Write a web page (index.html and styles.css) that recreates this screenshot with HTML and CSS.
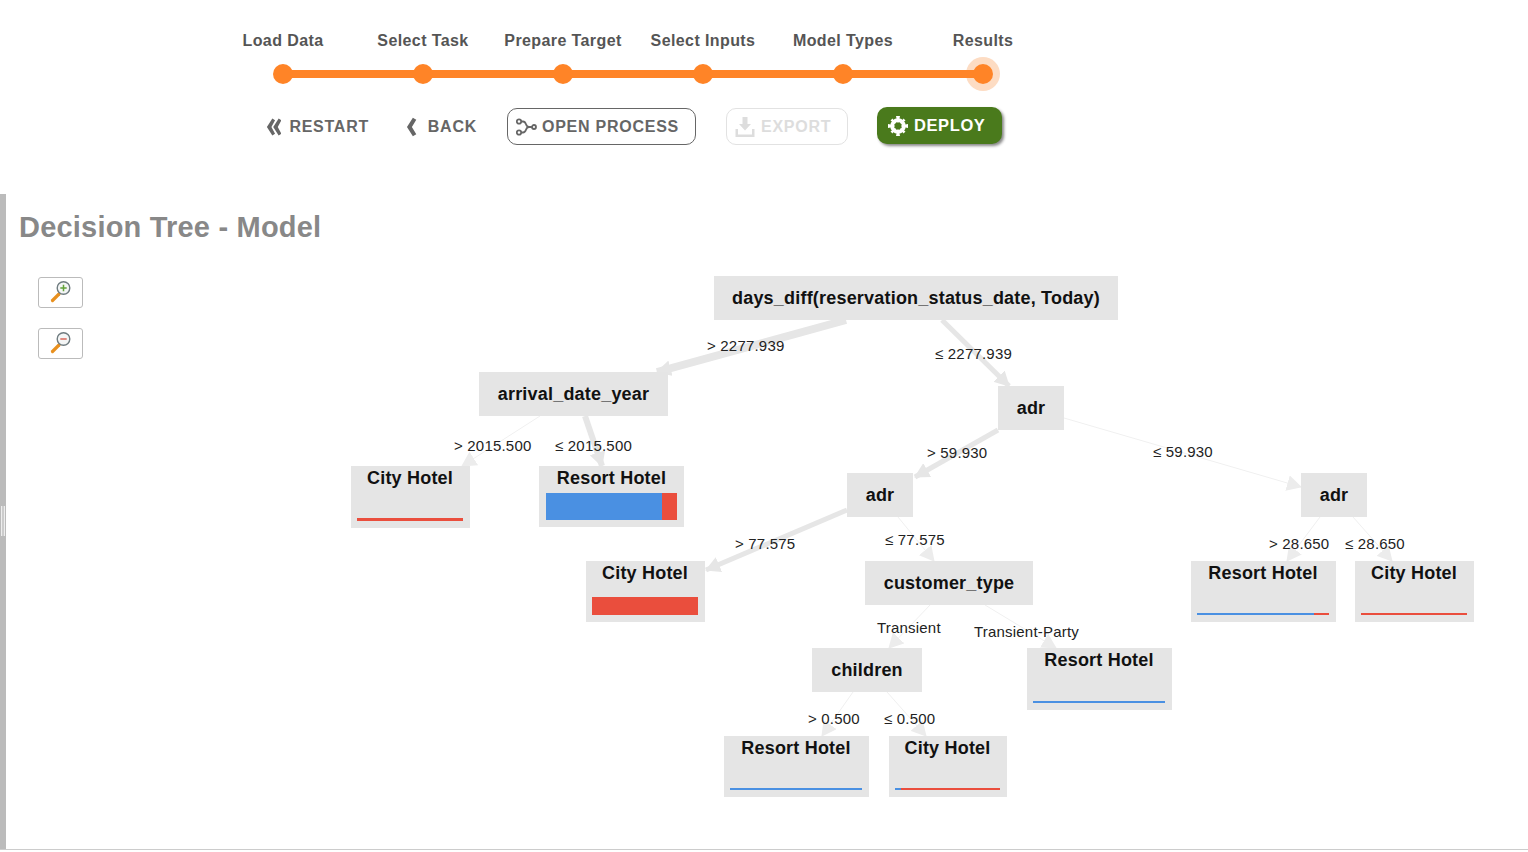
FILE: index.html
```html
<!DOCTYPE html>
<html lang="en">
<head>
    <meta charset="UTF-8">
    <title>Decision Tree - Model</title>
    <link rel="stylesheet" href="styles.css">
</head>
<body>

    <header class="top">
        <ol class="steps">
            <li class="step">Load Data</li>
            <li class="step">Select Task</li>
            <li class="step">Prepare Target</li>
            <li class="step">Select Inputs</li>
            <li class="step">Model Types</li>
            <li class="step step-current">Results</li>
        </ol>

        <div class="actions">
            <button class="btn btn-plain btn-restart">
                <svg width="17" height="20" viewBox="0 0 17 20"><path d="M7 0.500 L1 10 L7 19.500 L10 17.500 L6 10 L10 2.500 Z M14 0.500 L8 10 L14 19.500 L17 17.500 L13 10 L17 2.500 Z" fill="#666"/></svg>
                RESTART
            </button>
            <button class="btn btn-plain btn-back">
                <svg width="11" height="20" viewBox="0 0 11 20"><path d="M7 0.500 L1 10 L7 19.500 L10.500 17.500 L6 10 L10.500 2.500 Z" fill="#666"/></svg>
                BACK
            </button>
            <button class="btn btn-box btn-open">
                <svg width="21" height="18" viewBox="0 0 21 18" fill="none" stroke="#666" stroke-width="1.800"><circle cx="3" cy="3.500" r="2.200"/><circle cx="3" cy="14.500" r="2.200"/><circle cx="18" cy="9" r="2"/><path d="M5.500 3.500 H7 C11 3.500 9 9 13 9 H16 M5.500 14.500 H7 C11 14.500 9 9 13 9"/></svg>
                OPEN PROCESS
            </button>
            <button class="btn btn-box btn-export">
                <svg width="20" height="22" viewBox="0 0 20 22"><path d="M7.500 1 H12.500 V8 H16 L10 14.500 L4 8 H7.500 Z M0.500 13 H3 V18.500 H17 V13 H19.500 V21 H0.500 Z" fill="#ddd"/></svg>
                EXPORT
            </button>
            <button class="btn btn-deploy">
                <svg width="20" height="20" viewBox="0 0 20 20"><circle cx="10" cy="10" r="5.800" fill="none" stroke="#fff" stroke-width="4"/><path d="M10 10 L8 0 H12 Z M10 10 L8 20 H12 Z M10 10 L0 8 V12 Z M10 10 L20 8 V12 Z M10 10 L2.500 4.500 L4.500 2.500 Z M10 10 L15.500 2.500 L17.500 4.500 Z M10 10 L2.500 15.500 L4.500 17.500 Z M10 10 L15.500 17.500 L17.500 15.500 Z" fill="#fff"/><circle cx="10" cy="10" r="3.400" fill="#4a7a1c"/></svg>
                DEPLOY
            </button>
        </div>
    </header>

    <main class="panel">
        <div class="splitter"><span class="grip"></span></div>
        <section class="content">
            <h1 class="title">Decision Tree - Model</h1>

            <div class="tree">
                <svg class="edges" width="1522" height="586" viewBox="0 0 1522 586">
                    <defs>
                        <marker id="head" markerUnits="userSpaceOnUse" markerWidth="15" markerHeight="16" refX="14" refY="8" orient="auto">
                            <path d="M0 0 L15 8 L0 16 Z" fill="#e6e6e6"/>
                        </marker>
                        <marker id="head-thin" markerUnits="userSpaceOnUse" markerWidth="15" markerHeight="16" refX="14" refY="8" orient="auto">
                            <path d="M0 0 L15 8 L0 16 Z" fill="#ececec"/>
                        </marker>
                    </defs>
                    <g fill="none" stroke="#e6e6e6" marker-end="url(#head)">
                        <path stroke-width="8" d="M840 58 L651 110"/>
                        <path stroke-width="5" d="M936 58 L1003 124"/>
                        <path stroke-width="5" d="M992 168 L909 215"/>
                        <path stroke-width="6" d="M579 154 L596 204"/>
                        <path stroke-width="5" d="M841 248 L700 308"/>
                    </g>
                    <g fill="none" stroke="#f0f0f0" stroke-width="1" marker-end="url(#head-thin)">
                        <path d="M1058 156 L1295 225"/>
                        <path d="M534 154 L456 204"/>
                        <path d="M892 255 L928 299"/>
                        <path d="M924 343 L883 386"/>
                        <path d="M979 343 L1050 386"/>
                        <path d="M847 430 L816 474"/>
                        <path d="M881 430 L920 474"/>
                        <path d="M1314 255 L1281 299"/>
                        <path d="M1347 255 L1386 299"/>
                    </g>
                </svg>

                <div class="zoom">
                    <button class="zoom-btn">
                        <svg width="22" height="24" viewBox="0 0 22 24"><path d="M9 15 L2.500 21.500" stroke="#e8901f" stroke-width="3.200" stroke-linecap="round"/><circle cx="13.500" cy="9" r="6.300" fill="#f4f6f6" stroke="#6f7c80" stroke-width="1.400"/><path d="M13.500 5.800 V12.200 M10.300 9 H16.700" stroke="#62a23a" stroke-width="1.500"/></svg>
                    </button>
                    <button class="zoom-btn">
                        <svg width="22" height="24" viewBox="0 0 22 24"><path d="M9 15 L2.500 21.500" stroke="#e8901f" stroke-width="3.200" stroke-linecap="round"/><circle cx="13.500" cy="9" r="6.300" fill="#f4f6f6" stroke="#6f7c80" stroke-width="1.400"/><path d="M10.300 9 H16.700" stroke="#d9675a" stroke-width="1.500"/></svg>
                    </button>
                </div>

                <div class="node n-root">days_diff(reservation_status_date, Today)</div>
                <div class="node n-year">arrival_date_year</div>
                <div class="node n-adr1">adr</div>
                <div class="node n-adr2">adr</div>
                <div class="node n-adr3">adr</div>
                <div class="node n-cust">customer_type</div>
                <div class="node n-child">children</div>

                <div class="leaf l-city1">City Hotel
                    <div class="bar" style="height:3px"><i class="red" style="width:100%"></i></div>
                </div>
                <div class="leaf l-resort1">Resort Hotel
                    <div class="bar" style="height:27px"><i class="blue" style="width:88.500%"></i><i class="red" style="width:11.500%"></i></div>
                </div>
                <div class="leaf l-city2">City Hotel
                    <div class="bar" style="height:18px"><i class="red" style="width:100%"></i></div>
                </div>
                <div class="leaf l-resort2">Resort Hotel
                    <div class="bar" style="height:2px"><i class="blue" style="width:100%"></i></div>
                </div>
                <div class="leaf l-resort3">Resort Hotel
                    <div class="bar" style="height:2px"><i class="blue" style="width:100%"></i></div>
                </div>
                <div class="leaf l-city3">City Hotel
                    <div class="bar" style="height:2px"><i class="blue" style="width:6%"></i><i class="red" style="width:94%"></i></div>
                </div>
                <div class="leaf l-resort4">Resort Hotel
                    <div class="bar" style="height:2px"><i class="blue" style="width:89%"></i><i class="red" style="width:11%"></i></div>
                </div>
                <div class="leaf l-city4">City Hotel
                    <div class="bar" style="height:2px"><i class="red" style="width:100%"></i></div>
                </div>

                <span class="edge-label e1">&gt; 2277.939</span>
                <span class="edge-label e2">≤ 2277.939</span>
                <span class="edge-label e3">&gt; 2015.500</span>
                <span class="edge-label e4">≤ 2015.500</span>
                <span class="edge-label e5">&gt; 59.930</span>
                <span class="edge-label e6">≤ 59.930</span>
                <span class="edge-label e7">&gt; 77.575</span>
                <span class="edge-label e8">≤ 77.575</span>
                <span class="edge-label e9">&gt; 28.650</span>
                <span class="edge-label e10">≤ 28.650</span>
                <span class="edge-label e11">Transient</span>
                <span class="edge-label e12">Transient-Party</span>
                <span class="edge-label e13">&gt; 0.500</span>
                <span class="edge-label e14">≤ 0.500</span>
            </div>
        </section>
    </main>

</body>
</html>
```

FILE: styles.css
```css
html, body {
    margin: 0;
    height: 100%;
    background-color: #fff;
    overflow: hidden;
}
body {
    font-family: "Liberation Sans", Arial, sans-serif;
}

/* stepper and buttons */
.top {
    height: 194px;
    padding-left: 213px;
    box-sizing: border-box;
}
.steps {
    display: flex;
    list-style: none;
    margin: 0;
    padding: 32px 0 0;
}
.step {
    position: relative;
    width: 140px;
    height: 55px;
    text-align: center;
    font-size: 16px;
    font-weight: bold;
    line-height: 18px;
    letter-spacing: 0.4px;
    color: #555;
    white-space: nowrap;
}
.step::before {
    content: "";
    position: absolute;
    z-index: 2;
    left: 60px;
    top: 32px;
    width: 20px;
    height: 20px;
    border-radius: 50%;
    background-color: #ff8427;
}
.step::after {
    content: "";
    position: absolute;
    z-index: 1;
    left: 70px;
    top: 38px;
    width: 140px;
    height: 8px;
    background-color: #ff8427;
}
/* halo sits under the line coming in from the left */
.step-current::after {
    z-index: 0;
    left: 53px;
    top: 25px;
    width: 34px;
    height: 34px;
    border-radius: 50%;
    background-color: #fddcc3;
}

.actions {
    display: flex;
    align-items: flex-start;
    gap: 30px;
    margin-top: 21px;
    padding-left: 53px;
}
.btn {
    display: flex;
    align-items: center;
    gap: 8px;
    height: 37px;
    padding: 0;
    box-sizing: border-box;
    background: none;
    border: none;
    font-family: inherit;
    font-size: 16px;
    font-weight: bold;
    letter-spacing: 0.75px;
    color: #666;
    white-space: nowrap;
}
.btn-restart {
    width: 103px;
    margin-right: 7px;
}
.btn-back {
    width: 71px;
    gap: 11px;
}
.btn-box {
    border: 1px solid #666;
    border-radius: 10px;
    background-color: #fff;
}
.btn-open {
    width: 189px;
    gap: 5px;
    padding-left: 8px;
}
.btn-export {
    width: 122px;
    gap: 6px;
    padding-left: 8px;
    border-color: #e2e2e2;
    color: #ddd;
}
.btn-deploy {
    width: 125px;
    gap: 6px;
    margin: -1px 0 0 -1px;
    padding-left: 11px;
    border-radius: 10px;
    background-color: #4a7a1c;
    color: #fff;
    font-size: 16.500px;
    letter-spacing: 0.6px;
    box-shadow: 2px 2px 3px #888;
}

/* tree panel */
.panel {
    display: flex;
    height: 655px;
    border-bottom: 1px solid #ccc;
}
.splitter {
    display: flex;
    align-items: center;
    justify-content: center;
    width: 6px;
    background-color: #bbb;
}
.grip {
    width: 2px;
    height: 30px;
    margin-bottom: 2px;
    border-left: 1px solid #eee;
    border-right: 1px solid #eee;
    background-color: #ccc;
}
.content {
    flex: 1;
}
.title {
    height: 68px;
    margin: 0;
    padding: 16px 0 0 13px;
    box-sizing: border-box;
    font-size: 29px;
    font-weight: bold;
    line-height: 34px;
    letter-spacing: 0.2px;
    color: #888;
}
.tree {
    position: relative;
    height: 586px;
}
.edges {
    position: absolute;
    left: 0;
    top: 0;
}
.zoom {
    position: absolute;
    left: 32px;
    top: 15px;
    display: flex;
    flex-direction: column;
    gap: 20px;
}
.zoom-btn {
    display: flex;
    align-items: center;
    justify-content: center;
    width: 45px;
    height: 31px;
    padding: 0 0 3px;
    background-color: #fff;
    border: 1px solid #bbb;
    border-radius: 3px;
}

.node, .leaf {
    position: absolute;
    box-sizing: border-box;
    background-color: #e5e5e5;
    color: #111;
    font-size: 18px;
    font-weight: bold;
    letter-spacing: 0.2px;
    text-align: center;
    white-space: nowrap;
}
.node {
    height: 44px;
    line-height: 45px;
}
.leaf {
    display: flex;
    flex-direction: column;
    justify-content: space-between;
    padding: 0 7px 7px 6px;
    line-height: 25px;
}
.bar {
    display: flex;
}
.bar i {
    display: block;
}
.blue { background-color: #4a90e2; }
.red { background-color: #ea4e3d; }

.n-root { left: 708px; top: 14px; width: 404px; }
.n-year { left: 473px; top: 110px; width: 189px; }
.n-adr1 { left: 992px; top: 124px; width: 66px; }
.n-adr2 { left: 841px; top: 211px; width: 66px; }
.n-adr3 { left: 1295px; top: 211px; width: 66px; }
.n-cust { left: 859px; top: 299px; width: 168px; }
.n-child { left: 806px; top: 386px; width: 110px; }

.l-city1 { left: 345px; top: 204px; width: 119px; height: 62px; }
.l-resort1 { left: 533px; top: 204px; width: 145px; height: 61px; padding-left: 7px; }
.l-city2 { left: 580px; top: 299px; width: 119px; height: 61px; }
.l-resort2 { left: 1021px; top: 386px; width: 145px; height: 62px; }
.l-resort3 { left: 718px; top: 474px; width: 145px; height: 61px; }
.l-city3 { left: 883px; top: 474px; width: 118px; height: 61px; }
.l-resort4 { left: 1185px; top: 299px; width: 145px; height: 61px; }
.l-city4 { left: 1349px; top: 299px; width: 119px; height: 61px; }

.edge-label {
    position: absolute;
    font-size: 15px;
    line-height: 18px;
    letter-spacing: 0.2px;
    color: #222;
    white-space: nowrap;
}
.e1 { left: 701px; top: 75px; }
.e2 { left: 929px; top: 83px; }
.e3 { left: 448px; top: 175px; }
.e4 { left: 549px; top: 175px; }
.e5 { left: 921px; top: 182px; }
.e6 { left: 1147px; top: 181px; }
.e7 { left: 729px; top: 273px; }
.e8 { left: 879px; top: 269px; }
.e9 { left: 1263px; top: 273px; }
.e10 { left: 1339px; top: 273px; }
.e11 { left: 871px; top: 357px; }
.e12 { left: 968px; top: 361px; }
.e13 { left: 802px; top: 448px; }
.e14 { left: 878px; top: 448px; }
```
